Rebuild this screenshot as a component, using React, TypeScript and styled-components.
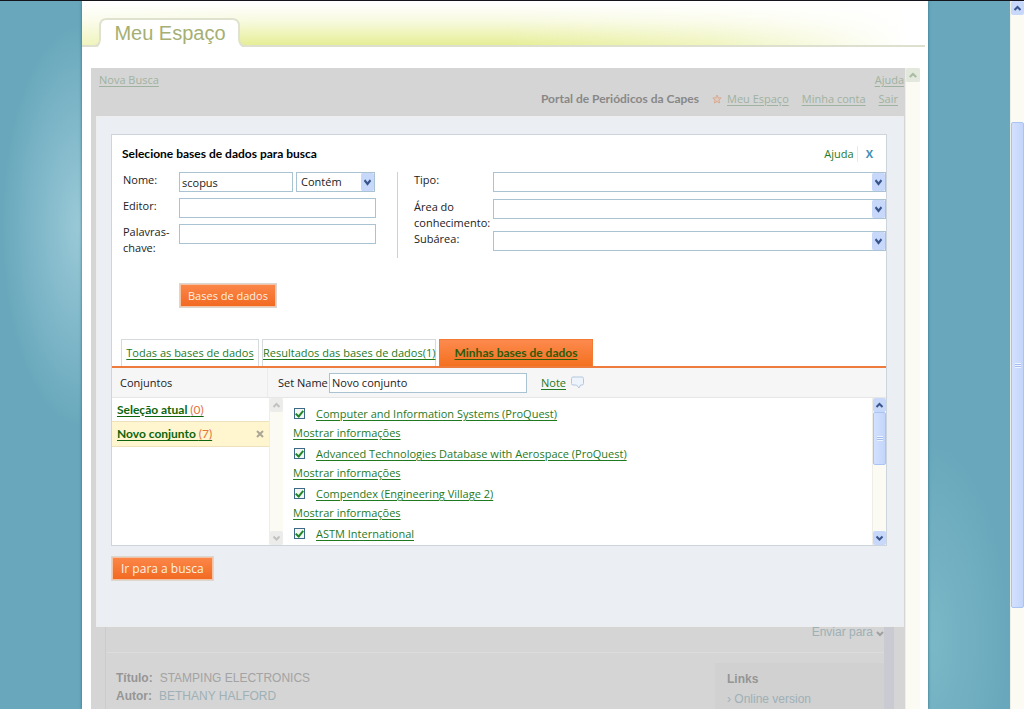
import React from 'react';
import styled, { createGlobalStyle, css } from 'styled-components';

const Global = createGlobalStyle`
  * { box-sizing: border-box; }
  html, body { margin: 0; padding: 0; }
  body {
    font-family: 'Open Sans', 'Noto Sans', sans-serif;
    font-size: 11px;
    line-height: 16px;
    color: #222;
  }
  input, select, button { font: inherit; color: inherit; margin: 0; border-radius: 0; }
  a { color: #1f7a1f; text-underline-offset: 2px; }
`;

const strong = css`
  font-family: Lato, 'Open Sans', sans-serif;
  font-size: 12px;
  font-weight: bold;
`;

const Screen = styled.div`
  display: flex;
  height: 100vh;
  overflow: hidden;
  border-top: 1px solid #14141c;
`;

const Backdrop = styled.div`
  flex: 1;
  min-width: 0;
  padding: 0 82px;
  display: flex;
  background:
    radial-gradient(ellipse 80px 200px at 82px 225px, #9bcad8 0%, rgba(155, 202, 216, 0) 100%),
    radial-gradient(ellipse 80px 200px at calc(100% - 82px) 640px, #7bb8c7 0%, rgba(123, 184, 199, 0) 100%),
    #69a8bc;
`;

const Sheet = styled.div`
  flex: 1;
  min-width: 0;
  display: flex;
  flex-direction: column;
  background: #fff;
  box-shadow: 0 0 3px #2f6f88;
`;

const Banner = styled.header`
  flex: none;
  height: 46px;
  margin-right: 3px;
  padding: 16px 0 0 8px;
  display: flex;
  align-items: flex-start;
  border-bottom: 2px solid #dde0cf;
  background:
    linear-gradient(to right, rgba(255, 255, 255, 0.4) 0%, rgba(255, 255, 255, 0) 20%, rgba(255, 255, 255, 0) 50%, rgba(255, 255, 255, 0.4) 75%, #fff 98%),
    linear-gradient(#fff 5%, #f8fae0 45%, #e6ee96 100%);
`;

const BannerTab = styled.h1`
  position: relative;
  margin: 0;
  width: 160px;
  height: 30px;
  text-align: center;
  font: 20px/33px 'Liberation Sans', Arial, sans-serif;
  color: #a5af73;
  svg { position: absolute; left: 0; top: 0; }
  span { position: relative; }
`;

const Frame = styled.div`
  flex: 1;
  min-height: 0;
  margin: 21px 8px 0 9px;
  display: flex;
`;

const Shade = styled.main`
  flex: 1;
  min-width: 0;
  padding-left: 5px;
  overflow: hidden;
  background: #d5d5d5;
`;

const TopBar = styled.nav`
  height: 48px;
  padding: 2px 0 0 3px;
  color: #888;
  a { color: #9fb29f; }
  b { ${strong} }
`;

const TopRow = styled.div<{ $end?: boolean }>`
  display: flex;
  justify-content: ${(p) => (p.$end ? 'flex-end' : 'space-between')};
  align-items: center;
  gap: 13px;
  height: 19px;
  padding-right: ${(p) => (p.$end ? 7 : 1)}px;
`;

const WithIcon = styled.span`
  display: inline-flex;
  align-items: center;
  gap: 5px;
`;

const Dialog = styled.section`
  height: 511px;
  margin-right: 1px;
  padding: 17px 16px 0 14px;
  background: #ebeff3;
  border: 1px solid #ededed;
`;

const Panel = styled.div`
  border: 1px solid #ccd5dc;
  background: #fff;
`;

const PanelHead = styled.div`
  display: flex;
  justify-content: space-between;
  align-items: center;
  height: 37px;
  padding: 0 10px;
  h2 { ${strong} margin: 0; color: #000; }
`;

const HeadActions = styled.div`
  display: flex;
  align-items: center;
  a { text-decoration: none; padding-right: 3px; border-right: 1px solid #e4ece4; }
`;

const CloseButton = styled.button`
  border: 0;
  padding: 0 3px;
  margin-left: 5px;
  background: none;
  color: #3f8fb8;
  font-weight: bold;
`;

const Form = styled.form`
  display: grid;
  grid-template-columns: 285px 1fr;
  height: 167px;
  align-content: start;
`;

const FieldColumn = styled.div<{ $divided?: boolean }>`
  display: grid;
  align-content: start;
  ${(p) =>
    p.$divided
      ? css`
          grid-template-columns: 79px 1fr;
          grid-template-rows: 27px 32px 27px;
          padding-left: 16px;
          border-left: 1px solid #d0d0d0;
        `
      : css`
          grid-template-columns: 56px 1fr;
          grid-template-rows: 26px 26px 32px;
          padding: 0 21px 0 11px;
        `}
`;

const Inline = styled.div`
  display: grid;
  grid-template-columns: 114px 79px;
  gap: 3px;
  align-items: start;
`;

const fieldBox = css`
  width: 100%;
  height: 20px;
  padding: 0 2px;
  border: 1px solid #a9c3d3;
  background: #fff;
  outline: 0;
`;

const TextBox = styled.input`${fieldBox}`;

const SelectWrap = styled.div`
  position: relative;
  min-width: 0;
  svg { position: absolute; right: 1px; top: 1px; pointer-events: none; }
`;

const Select = styled.select`
  ${fieldBox}
  display: block;
  appearance: none;
  padding: 0 4px;
`;

const OrangeButton = styled.button<{ $large?: boolean }>`
  height: 25px;
  padding: 0 ${(p) => (p.$large ? 8 : 7)}px;
  border: 2px solid #f3c3a5;
  outline: 1px solid #dcd6d0;
  outline-offset: -1px;
  background: linear-gradient(#fb8648, #f26a22);
  color: #fff0e4;
  font-size: ${(p) => (p.$large ? 12 : 11)}px;
  line-height: 20px;
`;

const SearchAction = styled.div`
  padding: 25px 0 0 67px;
  grid-column: 1 / -1;
`;

const Tabs = styled.div`
  display: flex;
  gap: 3px;
  height: 29px;
  padding-left: 9px;
  border-bottom: 2px solid #ee7a3c;
`;

const Tab = styled.a<{ $active?: boolean; $width: number }>`
  width: ${(p) => p.$width}px;
  text-align: center;
  white-space: nowrap;
  line-height: 26px;
  border: 1px solid ${(p) => (p.$active ? '#f27a35' : '#d5dadd')};
  border-bottom: 0;
  ${(p) =>
    p.$active &&
    css`
      ${strong}
      background: linear-gradient(#fc8a4e, #f4701f);
      color: #2f5a08;
    `}
`;

const SetBar = styled.div`
  display: grid;
  grid-template-columns: 156px 1fr;
  height: 30px;
  align-items: center;
  background: #f6f6f6;
  border-bottom: 1px solid #e6e6e6;
`;

const SetTitle = styled.div`
  padding-left: 8px;
  border-right: 1px solid #ebebeb;
  line-height: 29px;
`;

const SetName = styled.div`
  display: flex;
  align-items: center;
  padding-left: 10px;
  label { width: 51px; white-space: nowrap; }
  input { width: 198px; margin-right: 14px; }
`;

const Split = styled.div`
  display: grid;
  grid-template-columns: 157px 14px 1fr 14px;
  height: 147px;
`;

const SetList = styled.ul`
  margin: 0;
  padding: 0;
  list-style: none;
`;

const SetItem = styled.li<{ $active?: boolean }>`
  display: flex;
  justify-content: space-between;
  align-items: center;
  height: ${(p) => (p.$active ? 26 : 23)}px;
  padding: 0 5px;
  border: solid ${(p) => (p.$active ? '#eee2bd' : 'transparent')};
  border-width: ${(p) => (p.$active ? '1px 0' : '0')};
  background: ${(p) => (p.$active ? '#fff6cf' : 'transparent')};
  a { ${strong} color: #0d650d; }
  em { font-style: normal; font-weight: normal; color: #e2743c; }
`;

const RemoveButton = styled.button`
  border: 0;
  padding: 0;
  background: none;
  display: flex;
`;

const Results = styled.ul`
  margin: 0;
  padding: 6px 0 0 10px;
  list-style: none;
  overflow: hidden;
  min-width: 0;
`;

const Result = styled.li`
  height: 40px;
  line-height: 19px;
`;

const ResultLine = styled.div`
  display: flex;
  align-items: center;
  height: 19px;
  padding-left: 1px;
`;

const Check = styled.input`
  appearance: none;
  width: 11px;
  height: 11px;
  margin: 0 11px 0 0;
  border: 1px solid #3c6a86;
  background: #f4f8f4;
  display: grid;
  place-items: center;
  &:checked::after {
    content: '';
    width: 3px;
    height: 6px;
    margin-bottom: 2px;
    border: solid #21862a;
    border-width: 0 2px 2px 0;
    transform: rotate(40deg);
  }
`;

const Bar = styled.div`
  display: flex;
  flex-direction: column;
  justify-content: space-between;
  background: #fbfbf4;
  border-left: 1px solid #eeeee6;
  svg { display: block; flex: none; width: 100%; }
`;

const Thumb = styled.div<{ $top: number; $grow: number; $rest: number }>`
  flex: 1;
  display: grid;
  grid-template-rows: ${(p) => `${p.$top}fr ${p.$grow}fr ${p.$rest}fr`};
  &::before { content: ''; }
  span {
    border: 1px solid #a9c3f3;
    border-radius: 2px;
    background: linear-gradient(to right, #d3e1ff, #c3d5fb);
    display: grid;
    place-items: center;
  }
  span::after {
    content: '';
    width: 6px;
    height: 5px;
    background: repeating-linear-gradient(#eef4ff 0 1px, #a5bdee 1px 2px);
  }
`;

const FrameBar = styled(Bar)`width: 15px;`;
const WindowBar = styled(Bar)`width: 14px;`;

const Footer = styled.div`padding-top: 10px;`;

const Behind = styled.div`
  margin: 0 11px 0 9px;
  border-left: 1px solid #cbcbcb;
  border-right: 10px solid #cacad2;
  font: 12px/18px 'Liberation Sans', Arial, sans-serif;
  color: #a3a3a3;
  height: 200px;
  b { color: #959595; }
  a { color: #9eb0b6; text-decoration: none; }
`;

const SendRow = styled.div`
  display: flex;
  justify-content: flex-end;
  height: 26px;
  line-height: 10px;
  border-bottom: 1px solid #dcdcdc;
  gap: 3px;
`;

const Record = styled.div`
  display: grid;
  grid-template-columns: 1fr 169px;
  padding: 10px 0 0 10px;
`;

const Details = styled.dl`
  margin: 0;
  padding-top: 6px;
  div { display: flex; gap: 7px; }
  dt { font-weight: bold; color: #959595; }
  dd { margin: 0; }
`;

const Links = styled.aside`
  padding: 6px 12px;
  background: #d1d1d1;
  line-height: 20px;
  height: 90px;
`;

function Arrow({ up, tone = 'blue', size = 14 }: { up?: boolean; tone?: 'blue' | 'gray' | 'green'; size?: number }) {
  const tones = {
    blue: ['#c8d8fb', '#38558c'],
    gray: ['#ececea', '#c2c2bf'],
    green: ['#e2e8dc', '#a9bda5'],
  };
  const [fill, stroke] = tones[tone];
  return (
    <svg width={13} height={size} viewBox="0 0 13 14" preserveAspectRatio="none" aria-hidden="true">
      <rect x="0.5" y="0.5" width="12" height="13" rx="1" fill={fill} stroke={fill} />
      <path d={up ? 'M3.5 9 L6.5 6 L9.5 9' : 'M3.5 5.5 L6.5 8.5 L9.5 5.5'} fill="none" stroke={stroke} strokeWidth="2" />
    </svg>
  );
}

function SelectBox({ id, value = '', label }: { id: string; value?: string; label?: string }) {
  return (
    <SelectWrap>
      <Select id={id} aria-label={label} defaultValue={value}>
        <option>{value}</option>
      </Select>
      <Arrow size={18} />
    </SelectWrap>
  );
}

const databases = [
  'Computer and Information Systems (ProQuest)',
  'Advanced Technologies Database with Aerospace (ProQuest)',
  'Compendex (Engineering Village 2)',
  'ASTM International',
];

export default function App() {
  return (
    <>
      <Global />
      <Screen>
        <Backdrop>
          <Sheet>
            <Banner>
              <BannerTab>
                <svg width="160" height="31" viewBox="0 0 160 31" aria-hidden="true">
                  <path
                    d="M0 29 H3 Q10 29 10 22 V9 Q10 2 17 2 H142 Q149 2 149 9 V22 Q149 29 156 29 H160"
                    fill="none"
                    stroke="#dfe2cf"
                    strokeWidth="2"
                  />
                  <path d="M5 31 Q11 29 11 22 V9 Q11 3 17 3 H142 Q148 3 148 9 V22 Q148 29 155 31 Z" fill="#fff" />
                </svg>
                <span>Meu Espaço</span>
              </BannerTab>
            </Banner>
            <Frame>
              <Shade>
                <TopBar>
                  <TopRow>
                    <a href="#nova">Nova Busca</a>
                    <a href="#ajuda">Ajuda</a>
                  </TopRow>
                  <TopRow $end>
                    <b>Portal de Periódicos da Capes</b>
                    <WithIcon>
                      <svg width="10" height="10" viewBox="0 0 10 10" aria-hidden="true">
                        <path d="M5 1 L6.2 3.8 L9.2 4 L6.9 6 L7.6 9 L5 7.4 L2.4 9 L3.1 6 L0.8 4 L3.8 3.8 Z" fill="#dfc9bb" stroke="#d9aa92" />
                      </svg>
                      <a href="#espaco">Meu Espaço</a>
                    </WithIcon>
                    <a href="#conta">Minha conta</a>
                    <a href="#sair">Sair</a>
                  </TopRow>
                </TopBar>

                <Dialog>
                  <Panel>
                    <PanelHead>
                      <h2>Selecione bases de dados para busca</h2>
                      <HeadActions>
                        <a href="#ajuda-busca">Ajuda</a>
                        <CloseButton type="button" aria-label="Fechar">X</CloseButton>
                      </HeadActions>
                    </PanelHead>
                    <Form>
                      <FieldColumn>
                        <label htmlFor="nome">Nome:</label>
                        <Inline>
                          <TextBox id="nome" defaultValue="scopus" />
                          <SelectBox id="modo" value="Contém" label="Modo" />
                        </Inline>
                        <label htmlFor="editor">Editor:</label>
                        <TextBox id="editor" />
                        <label htmlFor="palavras">Palavras-chave:</label>
                        <TextBox id="palavras" />
                      </FieldColumn>
                      <FieldColumn $divided>
                        <label htmlFor="tipo">Tipo:</label>
                        <SelectBox id="tipo" />
                        <label htmlFor="area">Área do conhecimento:</label>
                        <SelectBox id="area" />
                        <label htmlFor="subarea">Subárea:</label>
                        <SelectBox id="subarea" />
                      </FieldColumn>
                      <SearchAction>
                        <OrangeButton type="button">Bases de dados</OrangeButton>
                      </SearchAction>
                    </Form>
                    <Tabs>
                      <Tab href="#todas" $width={138}>Todas as bases de dados</Tab>
                      <Tab href="#resultados" $width={174}>Resultados das bases de dados(1)</Tab>
                      <Tab href="#minhas" $width={154} $active>Minhas bases de dados</Tab>
                    </Tabs>
                    <SetBar>
                      <SetTitle>Conjuntos</SetTitle>
                      <SetName>
                        <label htmlFor="set">Set Name</label>
                        <TextBox id="set" defaultValue="Novo conjunto" />
                        <WithIcon>
                          <a href="#note">Note</a>
                          <svg width="13" height="13" viewBox="0 0 13 13" aria-hidden="true">
                            <path d="M2 1 H11 Q12.5 1 12.5 2.5 V7.5 Q12.5 9 11 9 H9.5 L8 12 L5.5 9 H2 Q0.5 9 0.5 7.5 V2.5 Q0.5 1 2 1 Z" fill="#eef4fb" stroke="#b4c8de" />
                          </svg>
                        </WithIcon>
                      </SetName>
                    </SetBar>
                    <Split>
                      <SetList>
                        <SetItem>
                          <a href="#selecao">Seleção atual <em>(0)</em></a>
                        </SetItem>
                        <SetItem $active>
                          <a href="#novo">Novo conjunto <em>(7)</em></a>
                          <RemoveButton type="button" aria-label="Remover">
                            <svg width="8" height="8" viewBox="0 0 8 8" aria-hidden="true">
                              <path d="M1 1 L7 7 M7 1 L1 7" stroke="#aaa696" strokeWidth="2" />
                            </svg>
                          </RemoveButton>
                        </SetItem>
                      </SetList>
                      <Bar>
                        <Arrow up tone="gray" />
                        <Arrow tone="gray" />
                      </Bar>
                      <Results>
                        {databases.map((name, i) => (
                          <Result key={name}>
                            <ResultLine>
                              <Check type="checkbox" id={`db${i}`} aria-label={name} defaultChecked />
                              <a href={`#base${i}`}>{name}</a>
                            </ResultLine>
                            {i < 3 && <a href={`#info${i}`}>Mostrar informações</a>}
                          </Result>
                        ))}
                      </Results>
                      <Bar>
                        <Arrow up />
                        <Thumb $top={0} $grow={53} $rest={66}>
                          <span />
                        </Thumb>
                        <Arrow />
                      </Bar>
                    </Split>
                  </Panel>
                  <Footer>
                    <OrangeButton type="button" $large>Ir para a busca</OrangeButton>
                  </Footer>
                </Dialog>

                <Behind>
                  <SendRow>
                    <a href="#enviar">Enviar para</a>
                    <svg width="8" height="12" viewBox="0 0 8 12" aria-hidden="true">
                      <path d="M1 5 L4 8 L7 5" fill="none" stroke="#a0a0a0" strokeWidth="2" />
                    </svg>
                  </SendRow>
                  <Record>
                    <Details>
                      <div><dt>Título:</dt><dd>STAMPING ELECTRONICS</dd></div>
                      <div><dt>Autor:</dt><dd><a href="#autor">BETHANY HALFORD</a></dd></div>
                      <div><dt>Publicado em:</dt><dd>Chem. Eng. News, 2008, 86, p. 8</dd></div>
                    </Details>
                    <Links>
                      <b>Links</b>
                      <div><a href="#online">› Online version</a></div>
                    </Links>
                  </Record>
                </Behind>
              </Shade>
              <FrameBar>
                <Arrow up tone="green" />
              </FrameBar>
            </Frame>
          </Sheet>
        </Backdrop>
        <WindowBar>
          <Arrow up />
          <Thumb $top={107} $grow={486} $rest={101}>
            <span />
          </Thumb>
        </WindowBar>
      </Screen>
    </>
  );
}
